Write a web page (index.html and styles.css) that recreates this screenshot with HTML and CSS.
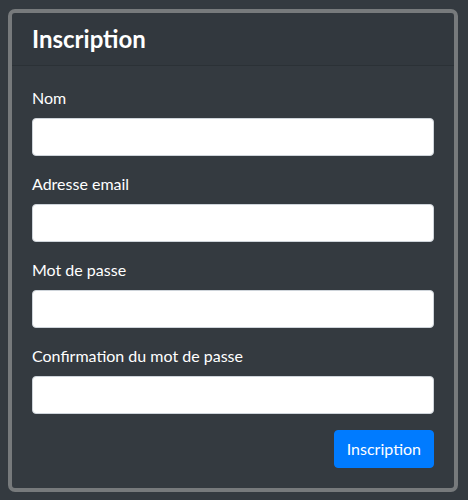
FILE: index.html
```html
<!DOCTYPE html>
<html lang="fr">
<head>
<meta charset="utf-8">
<link rel="stylesheet" href="styles.css">
<title>Inscription</title>
</head>
<body>
<div class="card">
  <div class="card-header"><h4 class="title">Inscription</h4></div>
  <form class="card-body">
    <div class="form-group">
      <label class="label" for="nom">Nom</label>
      <input class="input" id="nom" type="text">
    </div>
    <div class="form-group">
      <label class="label" for="email">Adresse email</label>
      <input class="input" id="email" type="email">
    </div>
    <div class="form-group">
      <label class="label" for="pw">Mot de passe</label>
      <input class="input" id="pw" type="password">
    </div>
    <div class="form-group">
      <label class="label" for="pw2">Confirmation du mot de passe</label>
      <input class="input" id="pw2" type="password">
    </div>
    <div class="actions">
      <button class="btn" type="button">Inscription</button>
    </div>
  </form>
</div>
</body>
</html>
```
FILE: styles.css
```css
html, body {
  margin: 0;
  background: #343a40;
}
body {
  padding: 8.5px 10px 8px 8px;
  font-family: "Segoe UI", Lato, "Noto Sans", sans-serif;
  color: #fff;
  font-size: 16px;
  line-height: 1.5;
}
.card {
  width: 450px;
  box-sizing: border-box;
  border: 4px solid #777a7c;
  border-radius: 7px;
  background: #343a40;
}
.card-header {
  padding: 12px 20px;
  border-bottom: 1px solid rgba(0, 0, 0, 0.125);
  background: rgba(0, 0, 0, 0.03);
}
.title {
  margin: 0;
  font-size: 24px;
  font-weight: 700;
  line-height: 1.2;
}
.card-body {
  display: block;
  margin: 0;
  padding: 20px;
}
.form-group {
  margin-bottom: 16px;
}
.label {
  display: block;
  margin-bottom: 8px;
}
.input {
  display: block;
  width: 100%;
  height: 38px;
  box-sizing: border-box;
  padding: 6px 12px;
  border: 1px solid #ced4da;
  border-radius: 4px;
  background: #fff;
  font: inherit;
}
.actions {
  display: flex;
  justify-content: flex-end;
}
.btn {
  height: 38px;
  padding: 6px 12px;
  border: 1px solid #007bff;
  border-radius: 4px;
  background: #007bff;
  color: #fff;
  font: inherit;
}
```
